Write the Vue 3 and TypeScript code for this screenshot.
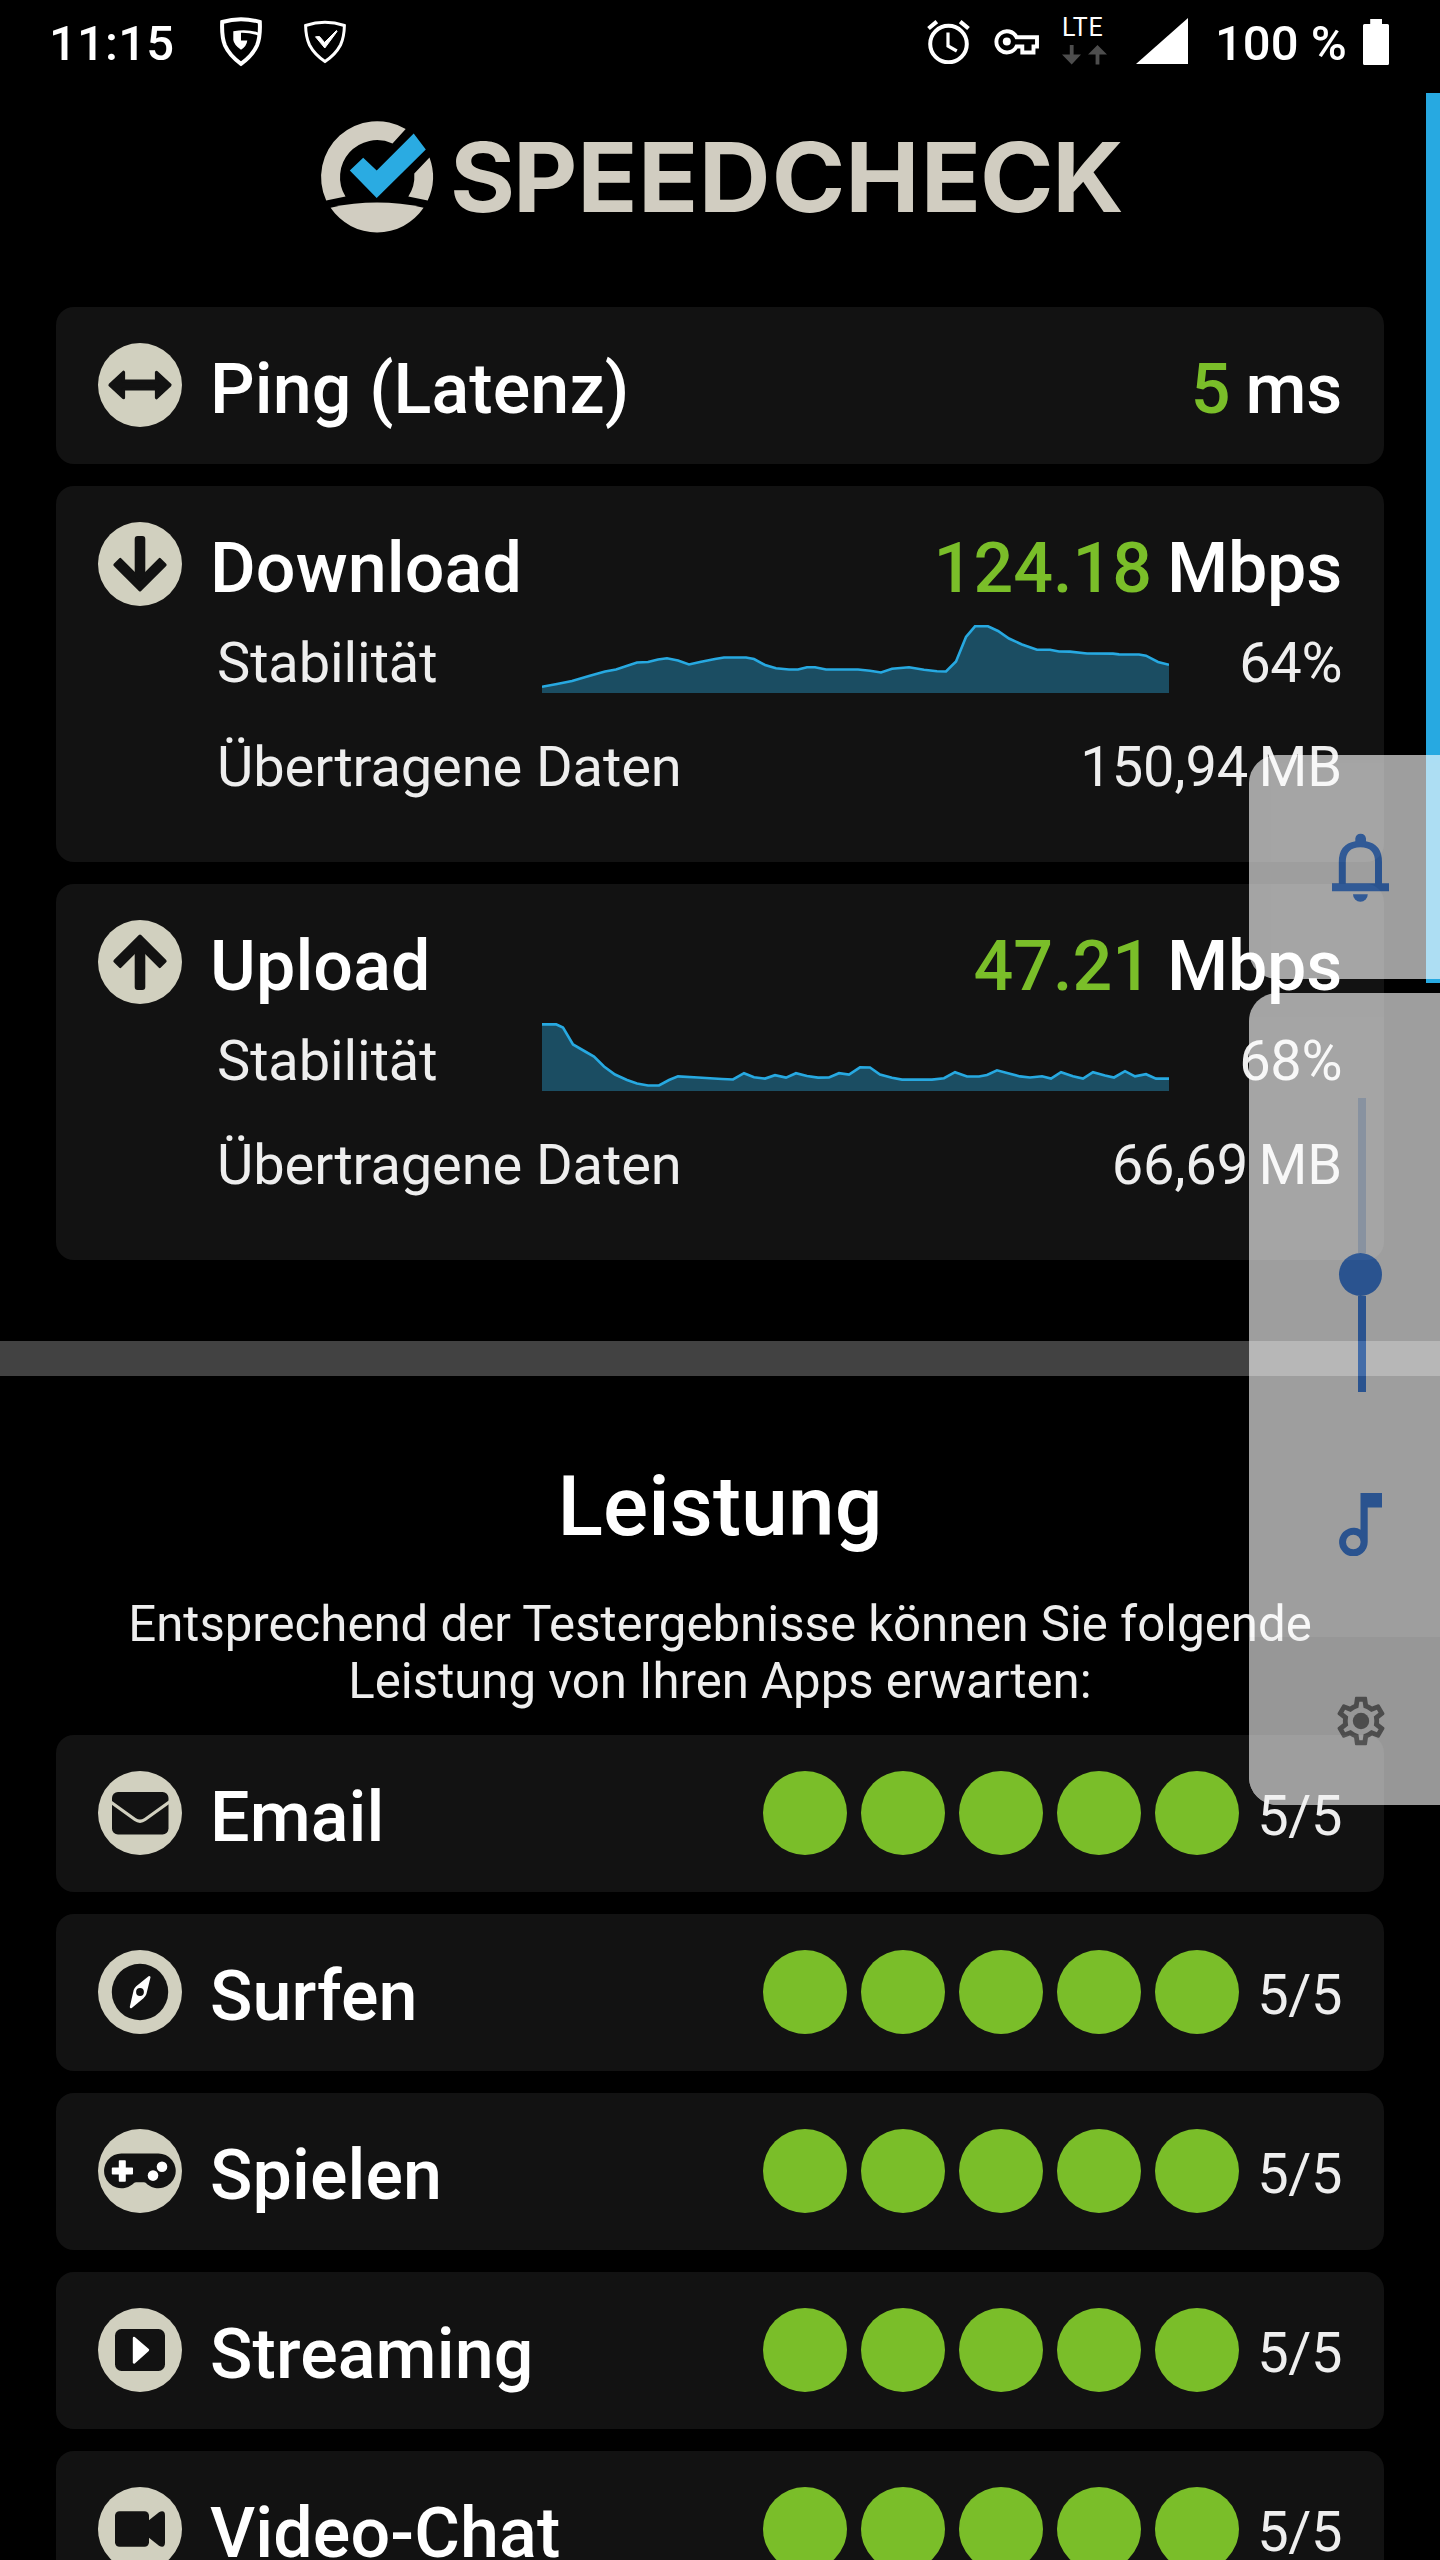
<script setup lang="ts">
type Point = [number, number]

interface Transfer {
  id: string
  label: string
  speed: string
  stability: string
  data: string
  points: Point[]
}

interface Service {
  icon: string
  label: string
  score: number
}

const transfers: Transfer[] = [
  {
    id: 'download',
    label: 'Download',
    speed: '124.18',
    stability: '64%',
    data: '150,94',
    points: [
      [0, 61.7], [15, 59], [30, 56], [47, 51], [63, 46.5], [74, 44.5], [95, 37.5], [106, 37], [116, 34.5], [125, 33.2],
      [136, 35.5], [147, 39.5], [158, 37], [173, 34], [182, 32.5], [204, 32.5], [212, 34], [223, 40], [234, 43.2],
      [247, 44.5], [256, 44.5], [265, 42.2], [273, 42.2], [284, 44.5], [316, 44.5], [328, 45.7], [339, 47.5], [350, 43.8],
      [367, 42.2], [382, 44.8], [395, 46.3], [404, 46.5], [414, 36.5], [424, 12], [433, 1.3], [446, 1.3], [456, 6],
      [467, 13.5], [480, 19.5], [495, 24.7], [508, 24.8], [517, 26.5], [528, 26.6], [545, 28.5], [571, 28.6],
      [577, 29.4], [597, 29.5], [604, 30.7], [616, 37], [627, 39.8],
    ],
  },
  {
    id: 'upload',
    label: 'Upload',
    speed: '47.21',
    stability: '68%',
    data: '66,69',
    points: [
      [0, 1.4], [14, 1.2], [21, 4.5], [31, 21.5], [44, 29], [52, 33.5], [62, 43.5], [73, 51.5], [85, 57], [95, 60.5],
      [106, 62.5], [117, 62.5], [127, 57], [136, 53.4], [156, 54.5], [180, 56], [191, 56.5], [202, 50.2], [212, 54.2],
      [223, 55.6], [233, 52.2], [244, 54.6], [254, 50.2], [265, 53], [276, 54.6], [287, 54.5], [297, 50.2], [307, 51.6],
      [318, 44.3], [328, 44.5], [338, 51.5], [350, 54.8], [360, 56.6], [390, 56.6], [402, 55.2], [413, 49.2],
      [425, 53.5], [437, 53.5], [445, 52], [455, 47.3], [467, 50.5], [478, 53.4], [488, 54.5], [500, 53.3], [509, 55.5],
      [519, 49.2], [531, 53.2], [541, 55.5], [551, 49.2], [563, 52.5], [572, 54.5], [583, 48.2], [593, 53.3],
      [604, 51.2], [614, 55.6], [627, 55.6],
    ],
  },
]

const services: Service[] = [
  { icon: 'email', label: 'Email', score: 5 },
  { icon: 'surf', label: 'Surfen', score: 5 },
  { icon: 'game', label: 'Spielen', score: 5 },
  { icon: 'stream', label: 'Streaming', score: 5 },
  { icon: 'video', label: 'Video-Chat', score: 5 },
]

const line = (points: Point[]): string => points.map((p) => p.join(',')).join(' ')
const area = (points: Point[]): string => `0,68 ${line(points)} 627,68`
</script>

<template>
  <div class="screen">
    <header class="status">
      <span class="clock">11:15</span>
      <svg class="guard" width="42" height="50" viewBox="0 0 42 50">
        <path d="M2.2 5Q21 -.6 39.8 5Q40.5 20 37 28.500Q32.500 38.500 21 46.800Q9.500 38.500 5 28.500Q1.500 20 2.200 5Z" fill="none" stroke="#fff" stroke-width="4" />
        <path d="M13.300 14.200Q28 12 38 15.500V18.500Q29 15.500 21 15.800V23.500H27.300Q26.800 29 21 32.800Q14 28 13.300 23Z" fill="#fff" />
      </svg>
      <svg class="shield" width="42" height="44" viewBox="0 0 42 44">
        <path d="M1.600 5.500Q21 -1 40.400 5.500Q40.200 17 36.500 25Q31.500 34.500 21 41.500Q10.500 34.500 5.500 25Q1.800 17 1.600 5.500Z" fill="none" stroke="#fff" stroke-width="3" />
        <path d="M11.500 16.800L15.500 16.500L20.500 22.500L32.500 10.500L33 11.500L20.800 28Z" fill="#fff" stroke="#fff" stroke-linejoin="round" />
      </svg>
      <span class="spacer"></span>
      <svg class="alarm" width="43" height="44" viewBox="0 0 43 44">
        <circle cx="21.500" cy="24" r="18.300" fill="none" stroke="#fff" stroke-width="4" />
        <path d="M1.500 8.500L9.800 1.700M41.500 8.500L33.200 1.700" stroke="#fff" stroke-width="4.200" />
        <path d="M21 12.500V26L29.800 31" fill="none" stroke="#fff" stroke-width="3.200" />
      </svg>
      <svg class="key" width="46" height="28" viewBox="0 0 46 28">
        <path d="M22.500 9.200H43V18.500H39.500V24.500H28.300V18.500H22.500A10.600 10.600 0 1 1 22.500 9.200Z" fill="none" stroke="#fff" stroke-width="3.900" />
        <circle cx="12.800" cy="13.500" r="4" fill="#fff" />
      </svg>
      <div class="lte">
        <span class="lte-text">LTE</span>
        <svg width="45" height="20" viewBox="0 0 45 20">
          <path d="M7.800 0H11.600V9.500H19L9.700 19.500L0 9.500H7.800ZM33.600 19.500H37.400V9.500H45L35.500 0L26 9.500H33.600Z" fill="#4d4d4d" />
        </svg>
      </div>
      <svg class="signal" width="52" height="46" viewBox="0 0 52 46"><path d="M0 46L52 0V46Z" fill="#fff" /></svg>
      <span class="percent">100 %</span>
      <svg class="battery" width="26" height="46" viewBox="0 0 26 46">
        <path d="M7.200 0H19V5H24.500Q26 5 26 6.500V44.500Q26 46 24.500 46H1.500Q0 46 0 44.500V6.500Q0 5 1.500 5H7.200Z" fill="#fff" />
      </svg>
    </header>

    <svg class="logo" width="800" height="114" viewBox="320 120 800 114">
      <g fill="#d1cdc1">
        <path d="M405.700 129A56 56 0 0 0 326.200 200.500L345.500 196.500A37 37 0 0 1 392.500 143.500Z" />
        <path d="M429.500 157.500A56 56 0 0 1 427.700 200.500L408.300 196.500A37 37 0 0 0 414.300 173.500Z" />
        <path d="M330.600 207.700Q377 197.500 423.600 207.700A56 56 0 0 1 330.600 207.700Z" />
        <text class="wordmark" transform="scale(1.04 1)" y="211.700" x="432.700 493.300 555.100 613.400 672 742.100 812.700 885.300 942.300 1011.700">SPEEDCHECK</text>
      </g>
      <path d="M349.800 170.500L363.200 157.800L376.700 170.500L413.700 133.500L425.800 149.500L376.700 198Z" fill="#2aabe2" />
    </svg>

    <main class="results">
      <section class="card">
        <div class="row">
          <svg class="icon" viewBox="0 0 84 84">
            <circle cx="42" cy="42" r="42" fill="#d1d0bf" />
            <path d="M12 42L25.500 29.300V38.200H58.500V29.300L72 42L58.500 54.700V45.800H25.500V54.700Z" fill="#121212" stroke="#121212" stroke-width="3.200" stroke-linejoin="round" />
          </svg>
          <h2 class="label">Ping (Latenz)</h2>
          <p class="value"><span class="number">5</span> <span class="unit">ms</span></p>
        </div>
      </section>

      <section v-for="t in transfers" :key="t.id" class="card">
        <div class="row">
          <svg class="icon" :class="{ flipped: t.id === 'upload' }" viewBox="0 0 84 84">
            <circle cx="42" cy="42" r="42" fill="#d1d0bf" />
            <rect x="36.700" y="14" width="10.600" height="48" rx="3" fill="#121212" />
            <path d="M42 67.900L16.950 42.850L22.250 37.550L42 57.300L61.750 37.550L67.050 42.850Z" fill="#121212" stroke="#121212" stroke-width="3.200" stroke-linejoin="round" />
          </svg>
          <h2 class="label">{{ t.label }}</h2>
          <p class="value"><span class="number">{{ t.speed }}</span> <span class="unit">Mbps</span></p>
        </div>
        <div class="detail stability">
          <span class="detail-name">Stabilität</span>
          <svg class="chart" width="627" height="68" viewBox="0 0 627 68">
            <polygon :points="area(t.points)" fill="#1b4d62" />
            <polyline :points="line(t.points)" fill="none" stroke="#27a9e1" stroke-width="2.600" />
          </svg>
          <span class="ratio">{{ t.stability }}</span>
        </div>
        <div class="detail transferred">
          <span>Übertragene Daten</span>
          <span class="amount">{{ t.data }} MB</span>
        </div>
      </section>
    </main>

    <div class="divider"></div>

    <section class="performance">
      <h1>Leistung</h1>
      <p class="intro">Entsprechend der Testergebnisse können Sie folgende<br />Leistung von Ihren Apps erwarten:</p>
      <div class="services">
        <div v-for="s in services" :key="s.label" class="card">
          <div class="row">
            <svg class="icon" viewBox="0 0 84 84">
              <circle cx="42" cy="42" r="42" fill="#d1d0bf" />
              <g v-if="s.icon === 'email'">
                <rect x="14" y="21" width="56.500" height="42.500" rx="6" fill="#121212" />
                <path d="M12 30.500L37 48.500Q42 52 47 48.500L72 30.500" fill="none" stroke="#d1d0bf" stroke-width="3.200" />
              </g>
              <g v-else-if="s.icon === 'surf'">
                <circle cx="42" cy="42" r="28.200" fill="#121212" />
                <path d="M51.300 27.300L47.300 43.500Q46.500 45.500 45 47L33 57L36.800 40.500Q37.500 38.500 39 37.200Z" fill="#fff" stroke="#fff" stroke-width="2.400" stroke-linejoin="round" />
                <circle cx="42" cy="42" r="3.900" fill="#121212" />
              </g>
              <g v-else-if="s.icon === 'game'">
                <path d="M24.300 24.500H59.500A17.400 17.400 0 1 1 49.500 55.500Q47.500 53.300 46 53.300H38Q36.500 53.300 34.300 55.500A17.400 17.400 0 1 1 24.300 24.500Z" fill="#121212" />
                <path d="M20.800 32Q20.800 31.200 21.600 31.200H27Q27.800 31.200 27.800 32V38.500H34.200Q35 38.500 35 39.300V44.700Q35 45.500 34.200 45.500H27.800V52Q27.800 52.800 27 52.800H21.600Q20.800 52.800 20.800 52V45.500H14.600Q13.800 45.500 13.800 44.700V39.300Q13.800 38.500 14.600 38.500H20.800Z" fill="#fff" />
                <circle cx="55" cy="46.600" r="5.300" fill="#fff" />
                <circle cx="64" cy="37.700" r="5.300" fill="#fff" />
              </g>
              <g v-else-if="s.icon === 'stream'">
                <rect x="17" y="21" width="50" height="42" rx="6.500" fill="#121212" />
                <path d="M36 30L50 42L36 54.500Z" fill="#fff" stroke="#fff" stroke-width="2.400" stroke-linejoin="round" />
              </g>
              <g v-else fill="#121212">
                <rect x="17" y="24.300" width="34" height="35.400" rx="4.500" />
                <path d="M50 34L61 25.200Q67 22.500 67 28.500V55.500Q67 61.500 61 58.800L50 50Z" />
              </g>
            </svg>
            <h2 class="label">{{ s.label }}</h2>
            <div class="dots"><i v-for="n in s.score" :key="n" class="dot"></i></div>
            <span class="score">{{ s.score }}/5</span>
          </div>
        </div>
      </div>
    </section>

    <div class="scrollbar"></div>

    <aside class="panel ringer">
      <svg width="57" height="69" viewBox="0 0 57 69">
        <g fill="#4587e7">
          <path d="M0 50.300H6.800V29Q6.800 11 23.300 8.300V5.500A5.400 5.400 0 0 1 34 5.500V8.300Q50 11 50 29V50.300H57V58.300H0ZM13.800 50.300H43V29Q43 14.200 28.400 14.200T13.800 29Z" fill-rule="evenodd" />
          <path d="M21 61.300H35.800A7.400 7.400 0 0 1 21 61.300Z" />
        </g>
      </svg>
    </aside>

    <aside class="panel volume">
      <div class="slider">
        <div class="track"></div>
        <div class="thumb"></div>
        <div class="fill"></div>
      </div>
      <svg class="note" width="43" height="63" viewBox="0 0 43 63">
        <path d="M21.500 0H43V14.500H28.700V49A14.300 14.300 0 1 1 21.500 36.700ZM14.300 41.700A7.300 7.300 0 1 0 14.300 56.300A7.300 7.300 0 1 0 14.300 41.700Z" fill="#4587e7" fill-rule="evenodd" />
      </svg>
      <div class="settings">
        <svg width="58" height="58" viewBox="0 0 24 24" fill="#7b7b7b">
          <path d="M19.430 12.980c.04-.32.07-.64.07-.98 0-.34-.03-.66-.07-.98l2.110-1.650c.19-.15.24-.42.12-.64l-2-3.460c-.09-.16-.26-.25-.44-.25-.06 0-.12.01-.17.03l-2.490 1c-.52-.4-1.080-.73-1.690-.98l-.38-2.650C14.460 2.180 14.250 2 14 2h-4c-.25 0-.46.18-.49.42l-.38 2.650c-.61.25-1.170.59-1.690.98l-2.490-1c-.06-.02-.12-.03-.18-.03-.17 0-.34.09-.43.25l-2 3.460c-.13.22-.07.49.12.64l2.110 1.650c-.04.32-.07.65-.07.98 0 .33.03.66.07.98l-2.110 1.650c-.19.15-.24.42-.12.64l2 3.460c.09.16.26.25.44.25.06 0 .12-.01.17-.03l2.490-1c.52.4 1.080.73 1.690.98l.38 2.650c.03.24.24.42.49.42h4c.25 0 .46-.18.49-.42l.38-2.650c.61-.25 1.170-.59 1.690-.98l2.490 1c.06.02.12.03.18.03.17 0 .34-.09.43-.25l2-3.460c.12-.22.07-.49-.12-.64l-2.110-1.650zm-1.980-1.710c.04.31.05.52.05.73 0 .21-.02.43-.05.73l-.14 1.130.89.7 1.080.84-.7 1.210-1.270-.51-1.040-.42-.9.68c-.43.32-.84.56-1.250.73l-1.060.43-.16 1.130-.2 1.350h-1.400l-.19-1.350-.16-1.130-1.060-.43c-.43-.18-.83-.41-1.230-.71l-.91-.7-1.060.43-1.270.51-.7-1.210 1.080-.84.89-.7-.14-1.130c-.03-.31-.05-.54-.05-.74s.02-.43.05-.73l.14-1.130-.89-.7-1.080-.84.7-1.210 1.270.51 1.040.42.9-.68c.43-.32.84-.56 1.250-.73l1.060-.43.16-1.130.2-1.350h1.390l.19 1.350.16 1.130 1.060.43c.43.18.83.41 1.230.71l.91.7 1.060-.43 1.270-.51.7 1.210-1.070.85-.89.7.14 1.130z" />
          <circle cx="12" cy="12" r="3.400" />
        </svg>
      </div>
    </aside>
  </div>
</template>

<style>
body {
  margin: 0;
  background: #000;
}
</style>

<style scoped>
.screen {
  position: relative;
  width: 1440px;
  height: 2560px;
  overflow: hidden;
  background: #000;
  color: #fff;
  font-family: Roboto, "Noto Sans", sans-serif;
}

.screen svg {
  display: block;
  flex: none;
}

h1,
h2,
p {
  margin: 0;
  font-weight: 500;
}

.status {
  display: flex;
  height: 93px;
  padding: 0 51px 0 49px;
  align-items: flex-start;
  white-space: nowrap;
}

.clock,
.percent {
  font-size: 49px;
  font-weight: 500;
  line-height: 88px;
}

.clock {
  width: 171px;
  letter-spacing: 0.2px;
}

.guard {
  margin-top: 17px;
}

.shield {
  margin: 20px 0 0 42px;
}

.spacer {
  flex: 1;
}

.alarm {
  margin-top: 20px;
}

.key {
  margin: 28px 22px 0 24px;
}

.lte {
  width: 45px;
  margin-right: 29px;
}

.lte-text {
  display: block;
  height: 45px;
  font-size: 25px;
  letter-spacing: 0.7px;
  line-height: 55px;
}

.signal {
  margin-top: 18px;
}

.percent {
  width: 148px;
  margin-left: 27px;
}

.battery {
  margin-top: 19px;
}

.logo {
  margin: 27px 0 0 320px;
  overflow: visible;
}

.wordmark {
  font-family: Inter, sans-serif;
  font-size: 95.6px;
  font-weight: 700;
}

.results {
  display: flex;
  flex-direction: column;
  gap: 22px;
  padding: 73px 56px 81px;
}

.card {
  box-sizing: border-box;
  padding: 36px 42px 0;
  height: 157px;
  border-radius: 18px;
  background: #121212;
}

.results .card + .card {
  height: 376px;
}

.row {
  display: flex;
  height: 84px;
  align-items: flex-start;
  white-space: nowrap;
}

.icon {
  width: 84px;
  height: 84px;
}

.flipped {
  transform: rotate(180deg);
}

.label {
  margin-left: 28px;
  font-size: 70px;
  letter-spacing: 0.12px;
  line-height: 92px;
}

.value {
  margin-left: auto;
  font-size: 70px;
  line-height: 92px;
  word-spacing: -2.5px;
}

.number {
  color: #7abe29;
}

.unit {
  letter-spacing: -0.2px;
}

.detail {
  display: flex;
  justify-content: space-between;
  padding-left: 119px;
  color: #eee;
  font-size: 56px;
  letter-spacing: -0.1px;
  white-space: nowrap;
}

.stability {
  height: 114px;
  line-height: 114px;
}

.detail-name {
  width: 325px;
}

.chart {
  margin: 19px auto 0 0;
}

.ratio {
  letter-spacing: -0.4px;
}

.amount {
  word-spacing: -3.5px;
}

.transferred {
  line-height: 94px;
}

.divider {
  height: 35px;
  background: #424242;
}

.performance {
  padding: 81px 56px 0;
}

h1 {
  font-size: 84.2px;
  line-height: 100px;
  text-align: center;
}

.intro {
  margin: 39px 0 25px;
  color: #eee;
  font-size: 49.15px;
  font-weight: 400;
  line-height: 57px;
  text-align: center;
  white-space: nowrap;
}

.services {
  display: flex;
  flex-direction: column;
  gap: 22px;
}

.dots {
  display: flex;
  gap: 14px;
  margin-left: auto;
}

.dot {
  width: 84px;
  height: 84px;
  border-radius: 50%;
  background: #7abe29;
}

.score {
  width: 103px;
  color: #eee;
  font-size: 56px;
  letter-spacing: -0.4px;
  line-height: 90px;
  text-align: right;
}

.scrollbar {
  position: absolute;
  top: 93px;
  right: 0;
  width: 14px;
  height: 890px;
  background: #27a9e1;
}

.panel {
  position: absolute;
  right: 0;
  box-sizing: border-box;
  width: 191px;
  overflow: hidden;
  border-radius: 28px 0 0 28px;
  background: #fff;
  opacity: 0.62;
}

.ringer {
  top: 755px;
  height: 224px;
  padding: 78px 0 0 83px;
}

.volume {
  top: 993px;
  height: 812px;
  padding-top: 105px;
}

.slider {
  display: flex;
  flex-direction: column;
  width: 44px;
  height: 294px;
  margin-left: 90px;
}

.track {
  width: 8px;
  height: 155px;
  margin-left: 19px;
  background: #d0e1f7;
}

.thumb {
  width: 43px;
  height: 43px;
  border-radius: 50%;
  background: #4587e7;
}

.fill {
  width: 8px;
  flex: 1;
  margin-left: 19px;
  background: #4587e7;
}

.note {
  margin: 101px 0 0 90px;
}

.settings {
  height: 168px;
  margin-top: 81px;
  padding: 55px 0 0 83px;
  box-sizing: border-box;
  background: #f4f4f4;
}
</style>
